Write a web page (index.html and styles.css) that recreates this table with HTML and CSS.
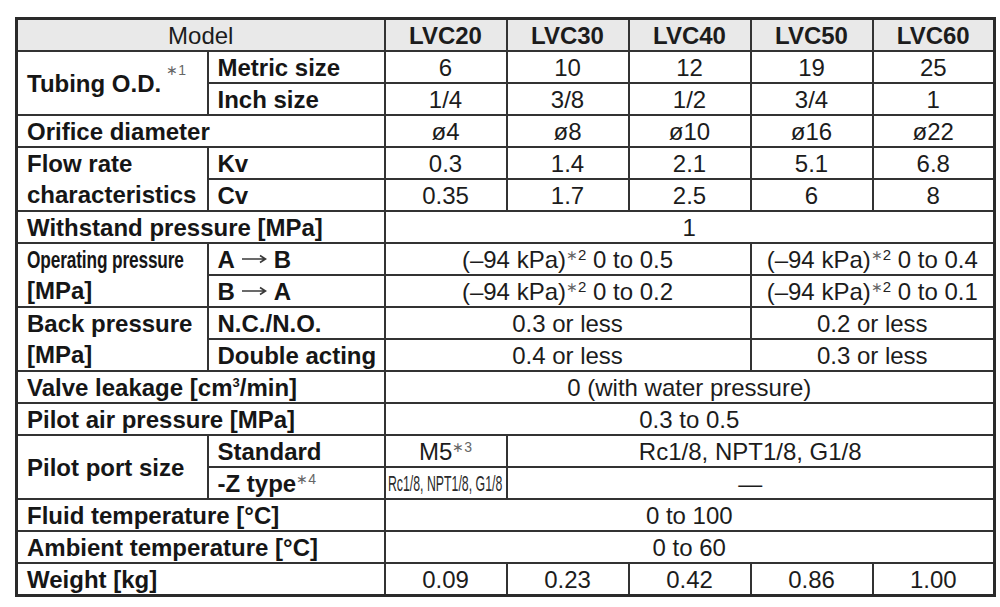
FILE: index.html
```html
<!DOCTYPE html>
<html>
<head>
<meta charset="utf-8">
<link rel="stylesheet" href="styles.css">
</head>
<body>
<div class="page">
<table class="spec">
<colgroup>
<col class="c-l1"><col class="c-l2"><col class="c-v"><col class="c-v"><col class="c-v"><col class="c-v"><col class="c-v">
</colgroup>
<tr class="head">
<th colspan="2" class="model">Model</th><th>LVC20</th><th>LVC30</th><th>LVC40</th><th>LVC50</th><th>LVC60</th>
</tr>
<tr>
<td rowspan="2" class="lbl">Tubing O.D.<sup class="fn fn-top">∗1</sup></td><td class="lbl">Metric size</td>
<td>6</td><td>10</td><td>12</td><td>19</td><td>25</td>
</tr>
<tr>
<td class="lbl">Inch size</td><td>1/4</td><td>3/8</td><td>1/2</td><td>3/4</td><td>1</td>
</tr>
<tr>
<td colspan="2" class="lbl">Orifice diameter</td><td>ø4</td><td>ø8</td><td>ø10</td><td>ø16</td><td>ø22</td>
</tr>
<tr>
<td rowspan="2" class="lbl multi">Flow rate<br>characteristics</td><td class="lbl">Kv</td>
<td>0.3</td><td>1.4</td><td>2.1</td><td>5.1</td><td>6.8</td>
</tr>
<tr>
<td class="lbl">Cv</td><td>0.35</td><td>1.7</td><td>2.5</td><td>6</td><td>8</td>
</tr>
<tr>
<td colspan="2" class="lbl">Withstand pressure [MPa]</td><td colspan="5">1</td>
</tr>
<tr>
<td rowspan="2" class="lbl multi"><span class="narrow">Operating pressure</span><br>[MPa]</td><td class="lbl">A<svg class="arrow" viewBox="0 0 26 10" width="26" height="10" aria-label="→"><path d="M1 5H24M19 1.5L24.5 5L19 8.5" fill="none" stroke="#3a3a3a" stroke-width="1.6"/></svg>B</td>
<td colspan="3">(–94 kPa)<sup class="fn">∗<span class="fn-n">2</span></sup> 0 to 0.5</td><td colspan="2">(–94 kPa)<sup class="fn">∗<span class="fn-n">2</span></sup> 0 to 0.4</td>
</tr>
<tr>
<td class="lbl">B<svg class="arrow" viewBox="0 0 26 10" width="26" height="10" aria-label="→"><path d="M1 5H24M19 1.5L24.5 5L19 8.5" fill="none" stroke="#3a3a3a" stroke-width="1.6"/></svg>A</td>
<td colspan="3">(–94 kPa)<sup class="fn">∗<span class="fn-n">2</span></sup> 0 to 0.2</td><td colspan="2">(–94 kPa)<sup class="fn">∗<span class="fn-n">2</span></sup> 0 to 0.1</td>
</tr>
<tr>
<td rowspan="2" class="lbl multi">Back pressure<br>[MPa]</td><td class="lbl">N.C./N.O.</td>
<td colspan="3">0.3 or less</td><td colspan="2">0.2 or less</td>
</tr>
<tr>
<td class="lbl">Double acting</td><td colspan="3">0.4 or less</td><td colspan="2">0.3 or less</td>
</tr>
<tr>
<td colspan="2" class="lbl">Valve leakage [cm<sup class="cube">3</sup>/min]</td><td colspan="5">0 (with water pressure)</td>
</tr>
<tr>
<td colspan="2" class="lbl">Pilot air pressure [MPa]</td><td colspan="5">0.3 to 0.5</td>
</tr>
<tr>
<td rowspan="2" class="lbl">Pilot port size</td><td class="lbl">Standard</td>
<td>M5<sup class="fn">∗3</sup></td><td colspan="4">Rc1/8, NPT1/8, G1/8</td>
</tr>
<tr>
<td class="lbl">-Z type<sup class="fn">∗4</sup></td><td class="tiny-cell"><span class="tiny">Rc1/8, NPT1/8, G1/8</span></td><td colspan="4">—</td>
</tr>
<tr>
<td colspan="2" class="lbl">Fluid temperature [°C]</td><td colspan="5">0 to 100</td>
</tr>
<tr>
<td colspan="2" class="lbl">Ambient temperature [°C]</td><td colspan="5">0 to 60</td>
</tr>
<tr>
<td colspan="2" class="lbl">Weight [kg]</td><td>0.09</td><td>0.23</td><td>0.42</td><td>0.86</td><td>1.00</td>
</tr>
</table>
</div>
</body>
</html>
```
FILE: styles.css
```css
html, body {
  margin: 0;
  background: #fff;
}
body {
  font-family: "Liberation Sans", Arial, Helvetica, sans-serif;
  color: #1c1c1c;
}
.page {
  padding: 17px 0 0 15px;
}
.spec {
  border-collapse: collapse;
  table-layout: fixed;
  width: 979px;
  font-size: 24px;
  border: 3px solid #2a2a2a;
}
.c-l1 { width: 191px; }
.c-l2 { width: 177px; }
.c-v { width: 122px; }
.spec th,
.spec td {
  border: 2px solid #333;
  height: 30px;
  padding: 0 9px;
  line-height: 29px;
  white-space: nowrap;
  text-align: center;
  vertical-align: middle;
  overflow: visible;
}
.spec tr.head th {
  height: 30px;
}
.spec th {
  background: #e9e9e9;
  font-weight: bold;
}
.spec th.model {
  font-weight: normal;
}
.spec td.lbl {
  text-align: left;
  font-weight: bold;
  color: #161616;
}
.spec td.multi {
  line-height: 31px;
}
.narrow {
  display: inline-block;
  transform: scaleX(0.72);
  transform-origin: left center;
  width: 170px;
  letter-spacing: -0.2px;
}
.arrow {
  display: inline-block;
  vertical-align: 4px;
  margin: 0 7px 0 6px;
}
.fn {
  font-size: 14px;
  font-weight: normal;
  color: #666;
  vertical-align: 8px;
  line-height: 0;
}
.fn-n {
  color: #222;
  font-size: 15px;
}
.fn-top {
  vertical-align: 17px;
  margin-left: 5px;
}
.cube {
  font-size: 13px;
  vertical-align: 9px;
  line-height: 0;
}
.tiny-cell {
  padding: 0;
  overflow: hidden;
}
.tiny {
  display: inline-block;
  font-size: 22px;
  transform: scaleX(0.56);
  transform-origin: center center;
  color: #2a2a2a;
  margin: 0 -60px;
}
```
